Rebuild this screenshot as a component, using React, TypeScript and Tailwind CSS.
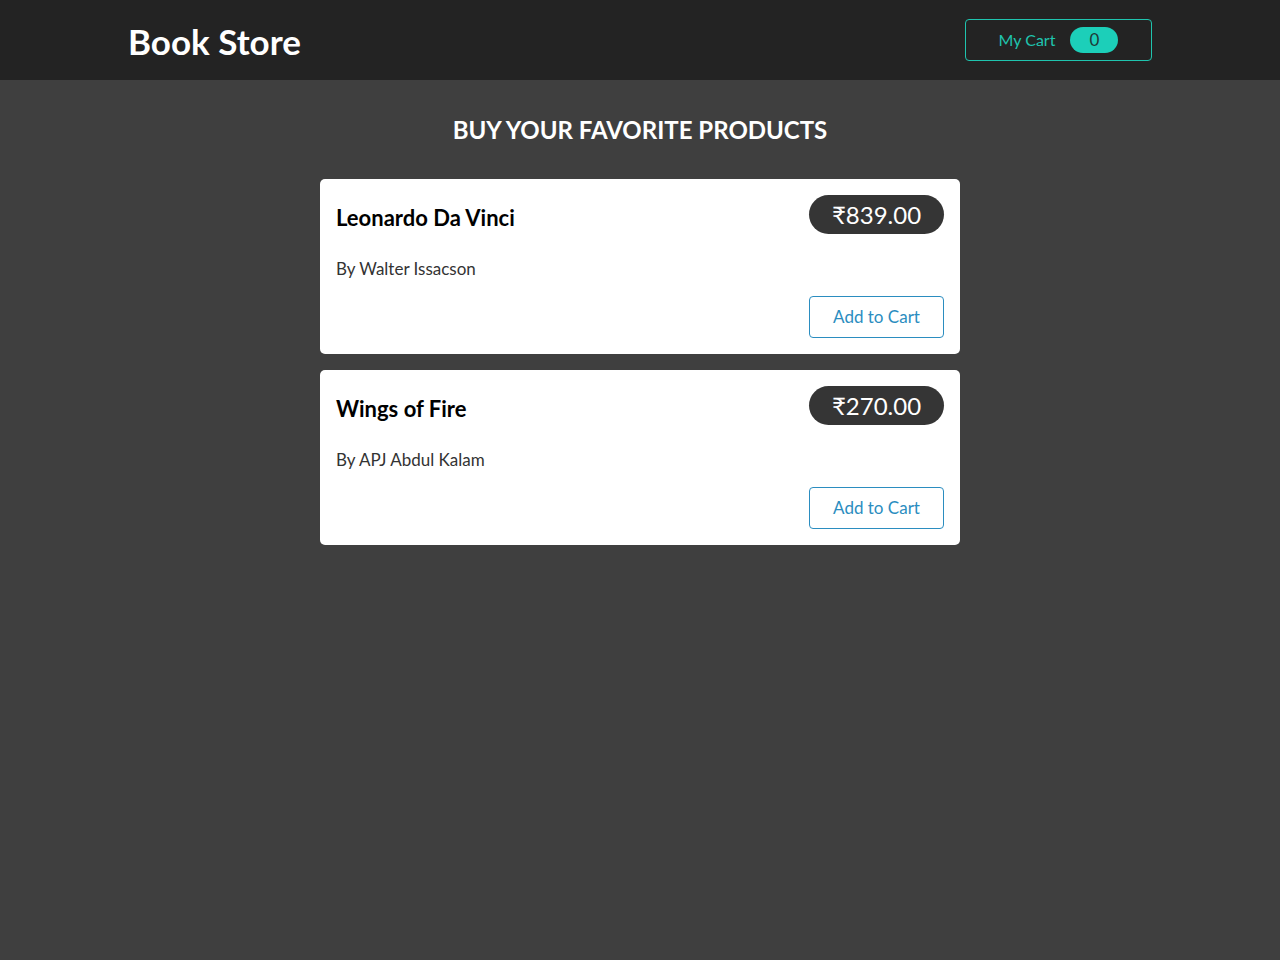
const BOOKS = [
  { id: 1, title: 'Leonardo Da Vinci', author: 'Walter Issacson', price: 839 },
  { id: 2, title: 'Wings of Fire', author: 'APJ Abdul Kalam', price: 270 },
];

function BookCard({ book }: { book: (typeof BOOKS)[number] }) {
  return (
    <div className="flex flex-col rounded-[5px] bg-white p-4">
      <div className="flex items-start justify-between">
        <h2 className="mt-[12px] text-[22px] font-bold leading-none text-black">{book.title}</h2>
        <span className="flex h-[39px] w-[135px] items-center justify-center rounded-full bg-[#353535] text-[24px] text-white">
          ₹{book.price.toFixed(2)}
        </span>
      </div>
      <p className="mt-[26px] text-[17px] leading-none text-[#333]">By {book.author}</p>
      <div className="mt-[19px] flex justify-end">
        <button className="flex h-[42px] w-[135px] items-center justify-center rounded-[4px] border border-[#2b8dc0] text-[17px] text-[#2b8dc0]">
          Add to Cart
        </button>
      </div>
    </div>
  );
}

export default function App() {
  return (
    <div className="min-h-[960px] bg-[#3f3f3f] font-['Lato','Liberation_Sans',sans-serif]">
      <header className="h-[80px] bg-[#232323]">
        <div className="mx-auto flex h-full w-[1024px] items-center justify-between">
          <h1 className="mt-[3px] text-[35px] font-bold text-white">Book Store</h1>
          <button className="-mt-[1px] flex h-[42px] w-[187px] items-center justify-center gap-[15px] rounded-[4px] border border-[#1fc4ae] text-[16px] text-[#1fc4ae]">
            My Cart
            <span className="flex h-[26px] w-[48px] items-center justify-center rounded-full bg-[#1ccfb9] text-[17px] text-[#1f3a36]">
              0
            </span>
          </button>
        </div>
      </header>
      <main className="mx-auto w-[640px] pt-[34px]">
        <h3 className="text-center text-[24px] font-bold leading-[32px] text-white">BUY YOUR FAVORITE PRODUCTS</h3>
        <div className="mt-[33px] flex flex-col gap-4">
          {BOOKS.map((b) => (
            <BookCard key={b.id} book={b} />
          ))}
        </div>
      </main>
    </div>
  );
}
